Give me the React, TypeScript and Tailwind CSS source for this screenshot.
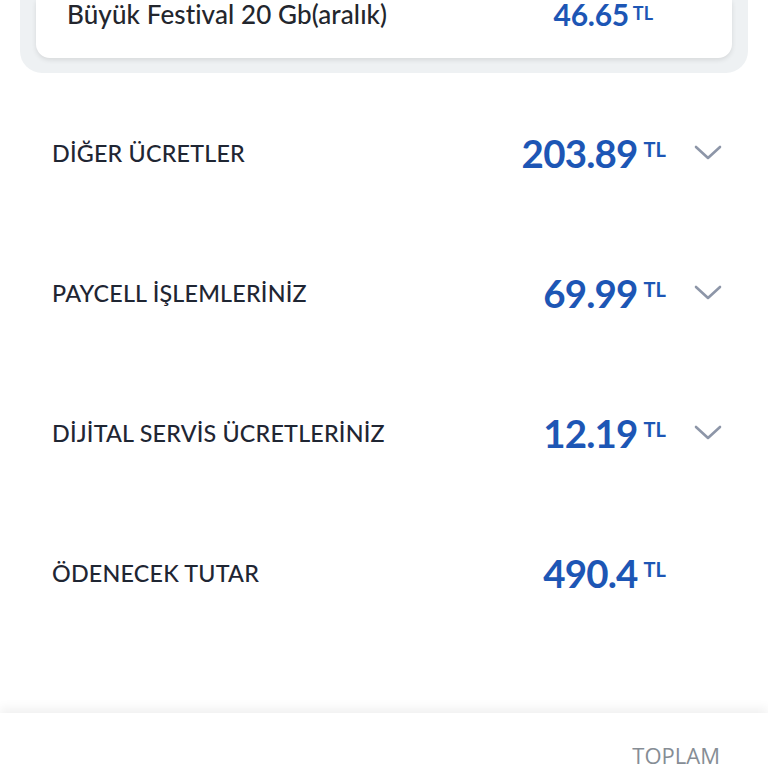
import React from "react";

const rows = [
  { label: "DİĞER ÜCRETLER", value: "203.89", chevron: true },
  { label: "PAYCELL İŞLEMLERİNİZ", value: "69.99", chevron: true },
  { label: "DİJİTAL SERVİS ÜCRETLERİNİZ", value: "12.19", chevron: true },
  { label: "ÖDENECEK TUTAR", value: "490.4", chevron: false },
];

function Chevron() {
  return (
    <svg width="30" height="18" viewBox="0 0 30 18" fill="none">
      <path d="M3 3 L15 14 L27 3" stroke="#8d96a8" strokeWidth="2.6" strokeLinecap="round" strokeLinejoin="round" />
    </svg>
  );
}

export default function App() {
  return (
    <div className="w-[768px] h-[768px] bg-white overflow-hidden relative flex flex-col" style={{ fontFamily: "Lato, 'Noto Sans', sans-serif" }}>
      <div className="mx-[20px] bg-[#eef1f3] rounded-b-[22px] px-[16px] pb-[15px]">
        <div className="bg-white rounded-b-[14px] shadow-[0_2px_5px_rgba(0,0,0,0.10)] h-[58px] flex items-start">
          <div className="h-[28px] flex items-center w-full pl-[31px]">
            <span className="text-[26px] text-[#23262d] font-medium leading-none tracking-[0.1px]">Büyük Festival 20 Gb(aralık)</span>
            <div className="ml-auto mr-[79px] flex items-start">
              <span className="text-[30px] font-bold text-[#1d56b5] tracking-[-0.3px] leading-[24px]">46.65</span>
              <span className="text-[18px] font-bold text-[#1d56b5] ml-[4px] leading-none mt-[2px]">TL</span>
            </div>
          </div>
        </div>
      </div>
      <div className="flex flex-col mt-[10px]">
        {rows.map((r) => (
          <div key={r.label} className="h-[140px] flex items-center pl-[52px]">
            <span className="text-[23.3px] font-medium text-[#1f2633] tracking-[0.2px]">{r.label}</span>
            <div className="ml-auto flex items-start mr-[98px]">
              <span className="text-[38.5px] font-bold text-[#1d56b5] tracking-[-0.8px] leading-none">{r.value}</span>
              <span className="text-[20px] font-bold text-[#1d56b5] ml-[6px] leading-none mt-[5px]">TL</span>
            </div>
            <div className="w-[30px] mr-[45px] -ml-[71px] flex justify-center">
              {r.chevron ? <Chevron /> : null}
            </div>
          </div>
        ))}
      </div>
      <div className="mt-auto h-[55px] bg-white shadow-[0_-5px_10px_rgba(0,0,0,0.06)] flex items-start justify-end pr-[48px] pt-[27px]">
        <span className="text-[22px] text-[#868d95] font-normal leading-[30px]" style={{ fontFamily: "'Open Sans', sans-serif" }}>TOPLAM</span>
      </div>
    </div>
  );
}
